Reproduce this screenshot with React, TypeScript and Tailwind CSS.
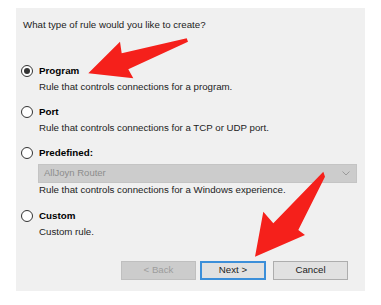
import React from 'react'

const font = { fontFamily: '"Liberation Sans", Arial, sans-serif' }

function Radio({ checked }: { checked?: boolean }) {
  return (
    <span className="w-3 h-3 rounded-full border border-[#333] bg-white flex items-center justify-center shrink-0">
      {checked && <span className="w-[6px] h-[6px] rounded-full bg-[#333]" />}
    </span>
  )
}

function Option({ label, checked, mt }: { label: string; checked?: boolean; mt: string }) {
  return (
    <div className={`flex items-center h-3 pl-[5px] gap-[6px] ${mt}`}>
      <Radio checked={checked} />
      <span className="font-bold text-black text-[9.8px] leading-3">{label}</span>
    </div>
  )
}

function Desc({ text, mt }: { text: string; mt: string }) {
  return <p className={`pl-[23px] h-3 leading-3 text-[9.7px] text-[#222] ${mt}`}>{text}</p>
}

export default function App() {
  return (
    <div className="relative w-[381px] h-[305px] bg-white pt-2 pl-4" style={font}>
      <div className="w-[349px] h-[283px] bg-[#f0f0f0] flex flex-col">
        <p className="pl-[7px] mt-[11px] h-3 leading-3 text-[9.7px] text-[#222]">What type of rule would you like to create?</p>

        <Option label="Program" checked mt="mt-[34px]" />
        <Desc text="Rule that controls connections for a program." mt="mt-1" />

        <Option label="Port" mt="mt-[13px]" />
        <Desc text="Rule that controls connections for a TCP or UDP port." mt="mt-1" />

        <Option label="Predefined:" mt="mt-[13px]" />
        <div className="ml-[22px] mt-[5px] w-[319px] h-[19px] bg-[#cccccc] border border-[#c4c4c4] flex items-center justify-between px-[5px]">
          <span className="text-[9.5px] text-[#8c8c8c]">AllJoyn Router</span>
          <svg width="8" height="5" viewBox="0 0 8 5" className="mr-[1px]">
            <path d="M0.5 0.5 L4 4 L7.5 0.5" fill="none" stroke="#9a9a9a" strokeWidth="1" />
          </svg>
        </div>
        <Desc text="Rule that controls connections for a Windows experience." mt="mt-[1px]" />

        <Option label="Custom" mt="mt-[14px]" />
        <Desc text="Custom rule." mt="mt-1" />

        <div className="flex items-center mt-[23px] pl-[105px]">
          <button className="w-[75px] h-[19px] bg-[#cccccc] border border-[#bfbfbf] text-[9.7px] text-[#9d9d9d]">&lt; Back</button>
          <button className="ml-1 w-[66px] h-[19px] bg-[#e1e1e1] border-2 border-[#3c8fd9] text-[9.7px] text-[#222]">Next &gt;</button>
          <button className="ml-[7px] w-[75px] h-[19px] bg-[#e1e1e1] border border-[#adadad] text-[9.7px] text-[#222]">Cancel</button>
        </div>
      </div>

      <svg className="absolute inset-0 pointer-events-none" width="381" height="305" viewBox="0 0 381 305">
        <polygon
          points="88.3,73.3 120,41.7 121.7,53.3 186.7,38.3 188,41.7 128.3,69.3 133.3,78.3"
          fill="#f5201b"
        />
        <polygon
          points="323.3,171.7 325,176.7 298.3,230 305,235 255,256.7 263.3,211.7 273.3,223.3"
          fill="#f5201b"
        />
      </svg>
    </div>
  )
}
